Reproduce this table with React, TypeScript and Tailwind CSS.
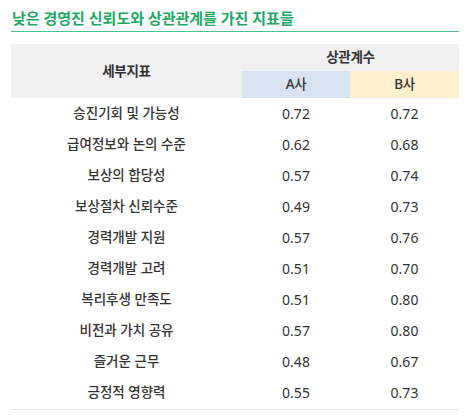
import React from "react";

const rows: [string, string, string][] = [
  ["승진기회 및 가능성", "0.72", "0.72"],
  ["급여정보와 논의 수준", "0.62", "0.68"],
  ["보상의 합당성", "0.57", "0.74"],
  ["보상절차 신뢰수준", "0.49", "0.73"],
  ["경력개발 지원", "0.57", "0.76"],
  ["경력개발 고려", "0.51", "0.70"],
  ["복리후생 만족도", "0.51", "0.80"],
  ["비전과 가치 공유", "0.57", "0.80"],
  ["즐거운 근무", "0.48", "0.67"],
  ["긍정적 영향력", "0.55", "0.73"],
];

export default function App() {
  return (
    <div
      className="w-[470px] h-[416px] bg-white px-[11px] pt-[8px] text-[#333]"
      style={{ fontFamily: '"Noto Sans", "Noto Sans CJK KR", sans-serif' }}
    >
      <div className="text-[15px] font-semibold text-[#1ea865] leading-[20px] pl-[1px]">
        낮은 경영진 신뢰도와 상관관계를 가진 지표들
      </div>
      <div className="mt-[3px] h-[1px] bg-[#4cc28e]" />
      <div className="mt-[12px]">
        <div className="grid grid-cols-[231px_108px_109px] bg-[#f1f1f1] text-[13.5px] font-semibold">
          <div className="row-span-2 flex items-center justify-center tracking-[-0.3px]">세부지표</div>
          <div className="col-span-2 h-[27px] flex items-center justify-center tracking-[-0.3px]">상관계수</div>
          <div className="h-[27px] bg-[#dae3f2] flex items-center justify-center font-medium tracking-[-0.3px]">A사</div>
          <div className="h-[27px] bg-[#fdf0cc] flex items-center justify-center font-medium tracking-[-0.3px]">B사</div>
        </div>
        {rows.map(([name, a, b]) => (
          <div key={name} className="grid grid-cols-[231px_108px_109px] h-[31px] items-center text-[13.5px]">
            <div className="text-center font-medium">{name}</div>
            <div className="text-center text-[14px]">{a}</div>
            <div className="text-center text-[14px]">{b}</div>
          </div>
        ))}
        <div className="h-[1px] bg-[#e6e6e6] mt-[1px]" />
      </div>
    </div>
  );
}
